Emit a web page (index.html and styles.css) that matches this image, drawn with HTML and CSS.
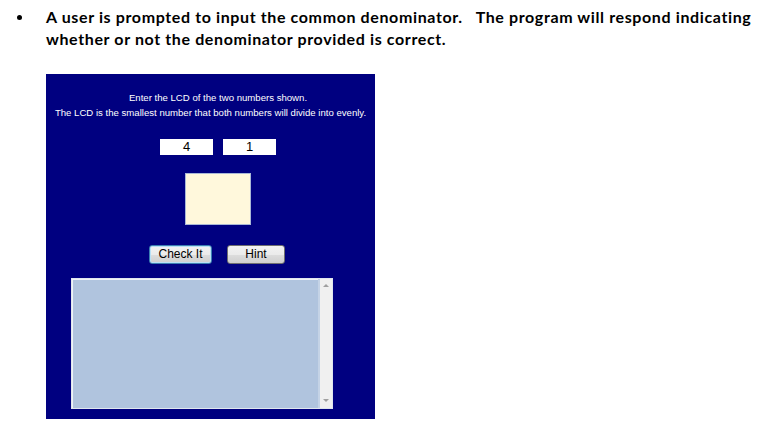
FILE: index.html
```html
<!DOCTYPE html>
<html>
<head>
<meta charset="utf-8">
<link rel="stylesheet" href="styles.css">
</head>
<body>
<div class="bullet-item">
  <span class="bullet"></span>
  <p class="bullet-text">A user is prompted to input the common denominator.&nbsp;&nbsp; The program will respond indicating<br>whether or not the denominator provided is correct.</p>
</div>
<div class="panel">
  <p class="line line-one">Enter the LCD of the two numbers shown.</p>
  <p class="line">The LCD is the smallest number that both numbers will divide into evenly.</p>
  <div class="numbers">
    <div class="num">4</div>
    <div class="num">1</div>
  </div>
  <div class="answer"></div>
  <div class="buttons">
    <button class="btn btn-focus">Check It</button>
    <button class="btn btn-hint">Hint</button>
  </div>
  <div class="log">
    <div class="log-area"></div>
    <div class="scroll">
      <span class="arrow arrow-up"></span>
      <span class="arrow arrow-down"></span>
    </div>
  </div>
</div>
</body>
</html>
```

FILE: styles.css
```css
html, body {
  margin: 0;
  padding: 0;
  background: #ffffff;
}

.bullet-item {
  display: flex;
  align-items: flex-start;
  padding-top: 6px;
  height: 74px;
  box-sizing: border-box;
}

.bullet {
  width: 5px;
  height: 5px;
  border-radius: 50%;
  background: #000;
  margin: 9px 24px 0 17px;
  flex: none;
}

.bullet-text {
  margin: 0;
  font-family: Lato, "Open Sans", sans-serif;
  font-weight: 700;
  font-size: 16px;
  letter-spacing: 0.62px;
  line-height: 21.5px;
  color: #000;
  white-space: nowrap;
}

.panel {
  margin-left: 46px;
  width: 329px;
  height: 345px;
  background: #000080;
  display: flex;
  flex-direction: column;
  padding-top: 16px;
  box-sizing: border-box;
}

.line {
  margin: 0;
  font-family: "Liberation Sans", Arial, sans-serif;
  font-size: 9.6px;
  line-height: 15px;
  color: #ffffff;
  text-align: center;
  white-space: nowrap;
}

.line-one {
  padding-left: 15px;
}

.numbers {
  display: flex;
  gap: 10px;
  margin-top: 19px;
  padding-left: 114px;
}

.num {
  width: 53px;
  height: 16px;
  background: #ffffff;
  font-family: "Liberation Sans", Arial, sans-serif;
  font-size: 13px;
  line-height: 16px;
  text-align: center;
  color: #000;
}

.answer {
  margin-top: 18px;
  margin-left: 139px;
  width: 66px;
  height: 52px;
  box-sizing: border-box;
  background: #fff8dc;
  border: 1px solid #a9b8d6;
}

.buttons {
  display: flex;
  gap: 15px;
  margin-top: 20px;
  padding-left: 103px;
}

.btn {
  height: 19px;
  box-sizing: border-box;
  padding: 0;
  font-family: "Liberation Sans", Arial, sans-serif;
  font-size: 12px;
  line-height: 17px;
  color: #000;
  border: 1px solid #707070;
  border-radius: 3px;
  background: linear-gradient(to bottom, #f2f2f2 0%, #ebebeb 50%, #dddddd 51%, #cfcfcf 100%);
}

.btn-focus {
  width: 63px;
  border-color: #3c7fb1;
  box-shadow: inset 0 0 0 1px #b8e0f6;
}

.btn-hint {
  width: 58px;
}

.log {
  margin-top: 14px;
  margin-left: 25px;
  width: 262px;
  height: 131px;
  box-sizing: border-box;
  border: 1px solid #dfe6ee;
  display: flex;
}

.log-area {
  flex: 1;
  background: #b0c4de;
  border-left: 1px solid #eef2f7;
  border-top: 1px solid #eef2f7;
}

.scroll {
  width: 12px;
  background: #f0f0f0;
  border-left: 2px solid #c4d3e6;
  display: flex;
  flex-direction: column;
  justify-content: space-between;
  align-items: center;
  padding: 5px 0 6px;
}

.arrow {
  width: 0;
  height: 0;
  border-left: 3px solid transparent;
  border-right: 3px solid transparent;
}

.arrow-up {
  border-bottom: 3px solid #a0a0a0;
}

.arrow-down {
  border-top: 3px solid #a0a0a0;
}
```
